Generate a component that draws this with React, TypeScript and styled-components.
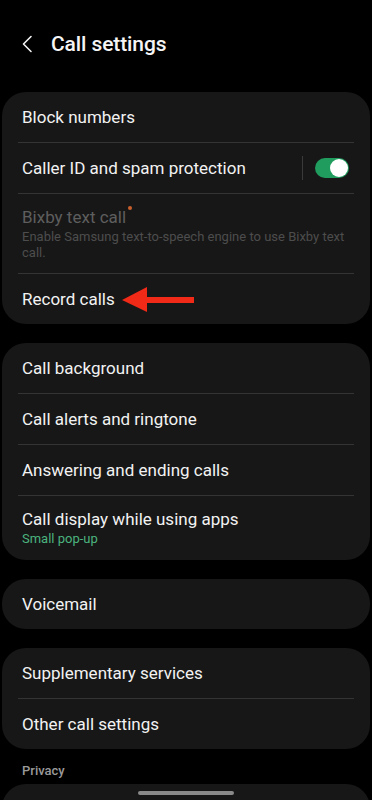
import React from "react";
import styled, { createGlobalStyle } from "styled-components";

const GlobalStyle = createGlobalStyle`
  html, body {
    margin: 0;
    padding: 0;
    background: #000;
  }
  body {
    font-family: Roboto, "Noto Sans", "Liberation Sans", sans-serif;
    -webkit-font-smoothing: antialiased;
  }
`;

type Item = {
    label: string;
    sub?: string;
    subTone?: "green" | "dim";
    disabled?: boolean;
    dot?: boolean;
    toggle?: boolean;
    arrow?: boolean;
};

const groups: Item[][] = [
    [
        {label: "Block numbers"},
        {label: "Caller ID and spam protection", toggle: true},
        {
            label: "Bixby text call",
            sub: "Enable Samsung text-to-speech engine to use Bixby text call.",
            subTone: "dim",
            disabled: true,
            dot: true,
        },
        {label: "Record calls", arrow: true},
    ],
    [
        {label: "Call background"},
        {label: "Call alerts and ringtone"},
        {label: "Answering and ending calls"},
        {label: "Call display while using apps", sub: "Small pop-up", subTone: "green"},
    ],
    [{label: "Voicemail"}],
    [{label: "Supplementary services"}, {label: "Other call settings"}],
];

const App = () => {
    return (
        <>
            <GlobalStyle/>
            <Screen>
                <Header>
                    <Back aria-label="Back">
                        <svg width="12" height="18" viewBox="0 0 12 18">
                            <path d="M10 1.5 L2.5 9 L10 16.5" fill="none" stroke="#f2f2f2" strokeWidth="1.6"
                                  strokeLinecap="round" strokeLinejoin="round"/>
                        </svg>
                    </Back>
                    <Title>Call settings</Title>
                </Header>

                <Groups>
                    {groups.map((group, gi) => (
                        <Card key={gi}>
                            {group.map((item, i) => (
                                <React.Fragment key={item.label}>
                                    {i > 0 && <Divider/>}
                                    <Row $tall={!!item.sub}>
                                        <Texts>
                                            <LabelLine>
                                                <Label $disabled={item.disabled}>
                                                    {item.label}
                                                    {item.dot && <Dot/>}
                                                </Label>
                                                {item.arrow && (
                                                    <Arrow width="74" height="28" viewBox="0 0 74 28">
                                                        <polygon points="0,14 25,1 25,26" fill="#f02a17"/>
                                                        <rect x="22" y="11" width="50" height="6" fill="#f02a17"/>
                                                    </Arrow>
                                                )}
                                            </LabelLine>
                                            {item.sub && <Sub $tone={item.subTone}>{item.sub}</Sub>}
                                        </Texts>
                                        {item.toggle && (
                                            <>
                                                <VSep/>
                                                <Switch><Knob/></Switch>
                                            </>
                                        )}
                                    </Row>
                                </React.Fragment>
                            ))}
                        </Card>
                    ))}
                </Groups>

                <SectionTitle>Privacy</SectionTitle>
                <PeekCard/>
                <HomeBar/>
            </Screen>
        </>
    );
};
export default App;

const Screen = styled.div`
    position: relative;
    width: 372px;
    height: 800px;
    overflow: hidden;
    background: #000;
    color: #f2f2f2;
`;
const Header = styled.div`
    display: flex;
    align-items: center;
    height: 90px;
    padding-left: 21px;
    box-sizing: border-box;
    padding-bottom: 2px;
`;
const Back = styled.div`
    display: flex;
    align-items: center;
    width: 30px;
    height: 24px;
`;
const Title = styled.div`
    font-size: 21px;
    font-weight: 500;
    color: #f5f5f5;
    letter-spacing: -0.1px;
`;
const Groups = styled.div`
    display: flex;
    flex-direction: column;
    gap: 19px;
    margin-top: 1.5px;
`;
const Card = styled.div`
    margin: 0 2px;
    background: #171717;
    border-radius: 24px;
    overflow: hidden;
`;
const Divider = styled.div`
    height: 1px;
    margin: 0 16px;
    background: #343434;
`;
const Row = styled.div<{ $tall: boolean }>`
    display: flex;
    align-items: center;
    min-height: 50px;
    padding: ${p => (p.$tall ? "12px" : "0")} 20px;
    box-sizing: border-box;
`;
const Texts = styled.div`
    flex: 1;
    display: flex;
    flex-direction: column;
`;
const LabelLine = styled.div`
    display: flex;
    align-items: center;
    height: 22px;
`;
const Label = styled.span<{ $disabled?: boolean }>`
    position: relative;
    font-size: 17px;
    color: ${p => (p.$disabled ? "#5e5e5e" : "#f2f2f2")};
`;
const Dot = styled.span`
    position: absolute;
    top: -1px;
    right: -6px;
    width: 4px;
    height: 4px;
    border-radius: 50%;
    background: #c9602c;
`;
const Arrow = styled.svg`
    margin-left: 7px;
    margin-top: 2px;
`;
const Sub = styled.div<{ $tone?: "green" | "dim" }>`
    font-size: 13px;
    line-height: ${p => (p.$tone === "dim" ? "16px" : "18px")};
    color: ${p => (p.$tone === "dim" ? "#4d4d4d" : "#4bb37e")};
    margin-top: ${p => (p.$tone === "dim" ? "1px" : "0")};
    margin-right: -4px;
`;
const VSep = styled.div`
    width: 1px;
    height: 24px;
    background: #3a3a3a;
    margin-right: 12px;
`;
const Switch = styled.div`
    display: flex;
    align-items: center;
    justify-content: flex-end;
    width: 34px;
    height: 20px;
    border-radius: 10px;
    background: #1f9c5e;
    padding: 1px;
    box-sizing: border-box;
    margin-right: 1px;
`;
const Knob = styled.div`
    width: 18px;
    height: 18px;
    border-radius: 50%;
    background: #fff;
`;
const SectionTitle = styled.div`
    padding: 14px 22px 0;
    height: 21px;
    font-size: 13px;
    font-weight: 500;
    color: #9a9a9a;
`;
const PeekCard = styled.div`
    margin: 0 2px;
    height: 60px;
    background: #171717;
    border-radius: 24px;
`;
const HomeBar = styled.div`
    position: absolute;
    left: 138px;
    bottom: 5px;
    width: 96px;
    height: 4px;
    border-radius: 2px;
    background: #8a8a8a;
`;
